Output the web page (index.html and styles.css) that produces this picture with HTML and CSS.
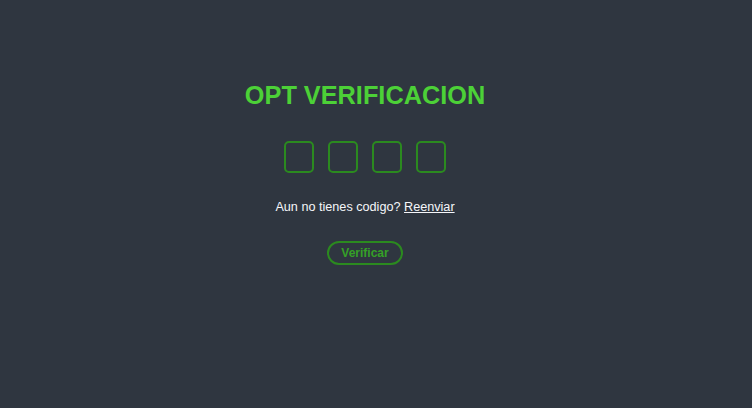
FILE: index.html
```html
<!DOCTYPE html>
<html lang="es">
<head>
<meta charset="utf-8">
<title>OPT Verificacion</title>
<link rel="stylesheet" href="styles.css">
</head>
<body>
<main class="page">
  <section class="card">
    <h1 class="title">OPT VERIFICACION</h1>
    <div class="otp">
      <input class="otp-box" type="text" maxlength="1">
      <input class="otp-box" type="text" maxlength="1">
      <input class="otp-box" type="text" maxlength="1">
      <input class="otp-box" type="text" maxlength="1">
    </div>
    <p class="resend">Aun no tienes codigo? <a class="resend-link" href="#">Reenviar</a></p>
    <button class="verify" type="button">Verificar</button>
  </section>
</main>
</body>
</html>
```

FILE: styles.css
```css
html, body {
  margin: 0;
  padding: 0;
  height: 100%;
  background: #2f3640;
}
body {
  font-family: "Liberation Sans", Arial, sans-serif;
}
.page {
  width: 730px;
  padding-top: 80px;
}
.card {
  display: flex;
  flex-direction: column;
  align-items: center;
}
.title {
  margin: 0;
  font-size: 25.3px;
  line-height: 30px;
  font-weight: bold;
  color: #4cd137;
}
.otp {
  display: flex;
  gap: 14px;
  margin-top: 31px;
}
.otp-box {
  box-sizing: border-box;
  width: 30px;
  height: 32px;
  margin: 0;
  padding: 0;
  border: 2px solid #2b8a1f;
  border-radius: 5px;
  background: transparent;
  outline: none;
}
.resend {
  margin: 26px 0 0;
  font-size: 12.65px;
  line-height: 16px;
  color: #f5f6fa;
}
.resend-link {
  color: #f5f6fa;
  text-decoration: underline;
}
.verify {
  box-sizing: border-box;
  margin-top: 26px;
  width: 76px;
  height: 24px;
  padding: 0;
  border: 2px solid #2b8a1f;
  border-radius: 12px;
  background: transparent;
  color: #35a027;
  font-family: "Liberation Sans", Arial, sans-serif;
  font-size: 12px;
  font-weight: bold;
}
```
